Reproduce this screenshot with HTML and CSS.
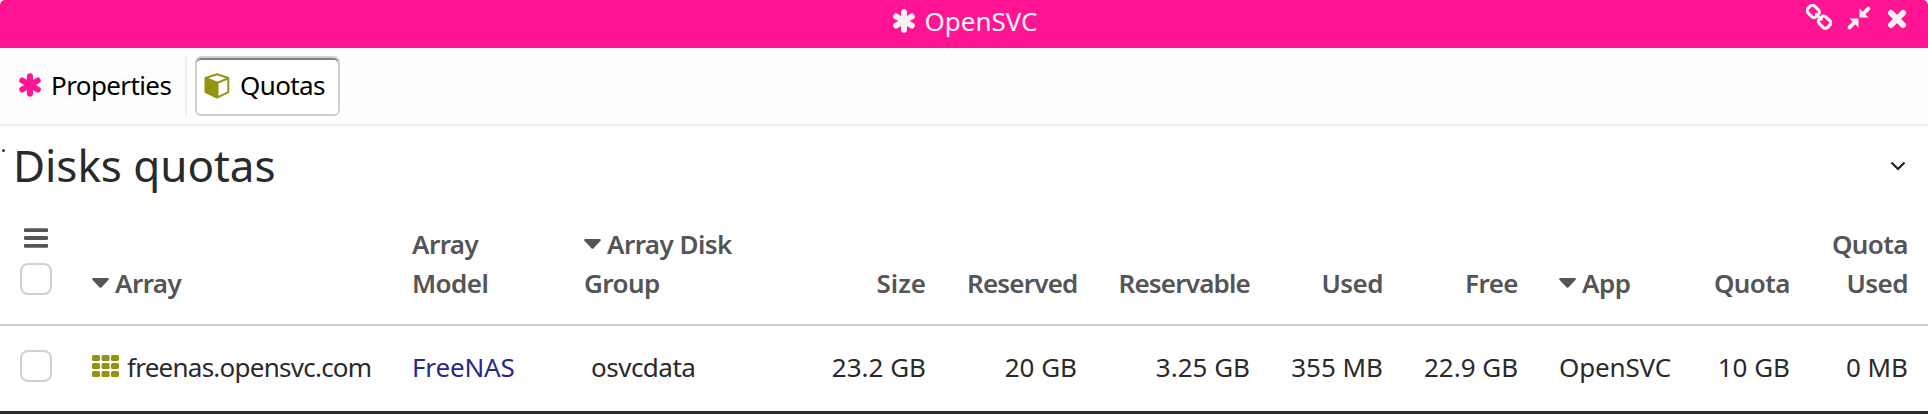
FILE: index.html
```html
<!DOCTYPE html>
<html lang="en">
<head>
<meta charset="utf-8">
<title>OpenSVC</title>
<link rel="stylesheet" href="styles.css">
</head>
<body>
<svg class="defs" width="0" height="0">
  <symbol id="asterisk" viewBox="0 0 24 24"><path d="M12 3.200v17.600M4.200 7.500l15.600 9M4.200 16.500l15.600-9" fill="none" stroke="currentColor" stroke-width="6" stroke-linecap="round"/></symbol>
  <symbol id="caret" viewBox="0 0 17 10"><path d="M1 0h15q1.500.6.4 1.900L9.600 9.300q-1.100 1-2.200 0L.6 1.900Q-.5.6 1 0z" fill="currentColor"/></symbol>
</svg>
<div class="window">
  <header class="titlebar">
    <div class="caption"><svg class="star"><use href="#asterisk"/></svg><span>OpenSVC</span></div>
    <div class="actions">
      <svg class="link" viewBox="0 0 26 26" fill="none" stroke="currentColor" stroke-width="3.200"><rect x="1.400" y="2.700" width="11.600" height="9.400" rx="3.200" transform="rotate(45 7.200 7.400)"/><rect x="12.800" y="13.500" width="11.600" height="9.400" rx="3.200" transform="rotate(45 18.600 18.200)"/><path d="M10.200 10.200l5.400 5.200" stroke-linecap="round" stroke-width="2.600"/></svg>
      <svg class="compress" viewBox="0 0 24 24" fill="currentColor" stroke="currentColor"><path d="M12.500 2.500v9.100h9.100zM11.500 21.500v-9.100H2.400z" stroke="none"/><path d="M15.500 8.500L21.400 2.600M8.500 15.500l-5.900 5.900" stroke-width="3.800" stroke-linecap="round"/></svg>
      <svg class="close" viewBox="0 0 20 20"><path d="M4 4l12 12M16 4L4 16" stroke="currentColor" stroke-width="6" stroke-linecap="round"/></svg>
    </div>
  </header>
  <nav class="tabs">
    <div class="tab"><svg class="star pink"><use href="#asterisk"/></svg><span>Properties</span></div>
    <div class="tab active"><svg class="cube" viewBox="0 0 26 26"><path d="M13 1.200L24.300 5v14.200L13 24.600 1.500 19.200V5z" fill="#fff" stroke="#949412" stroke-width="2" stroke-linejoin="round"/><path d="M1.500 5.200L13.500 9.600v15L1.500 19.200z" fill="#949412"/><path d="M1.500 5.200L13.500 9.600 24.500 5.200M13.500 9.600V24" fill="none" stroke="#949412" stroke-width="2"/></svg><span>Quotas</span></div>
  </nav>
  <section class="heading">
    <i class="dot"></i>
    <h1>Disks quotas</h1>
    <svg class="chevron" viewBox="0 0 16 10"><path d="M1.500 1.500L8 8l6.500-6.500" fill="none" stroke="currentColor" stroke-width="2.200"/></svg>
  </section>
  <table>
    <colgroup><col class="c-check"><col class="c-array"><col class="c-model"><col class="c-group"><col class="c-size"><col class="c-reserved"><col class="c-reservable"><col class="c-used"><col class="c-free"><col class="c-app"><col class="c-quota"><col class="c-qused"></colgroup>
    <thead>
      <tr>
        <th class="check"><svg class="menu" viewBox="0 0 24 20"><path d="M1.500 2.200h21M1.500 10h21M1.500 17.800h21" stroke="currentColor" stroke-width="3.800" stroke-linecap="round"/></svg><span class="box"></span></th>
        <th><svg class="caret"><use href="#caret"/></svg>Array</th>
        <th>Array<br>Model</th>
        <th><svg class="caret"><use href="#caret"/></svg>Array Disk<br>Group</th>
        <th class="num size">Size</th>
        <th class="num wide">Reserved</th>
        <th class="num wide">Reservable</th>
        <th class="num">Used</th>
        <th class="num">Free</th>
        <th><svg class="caret"><use href="#caret"/></svg>App</th>
        <th class="num">Quota</th>
        <th class="num">Quota<br>Used</th>
      </tr>
    </thead>
    <tbody>
      <tr>
        <td class="check"><span class="box"></span></td>
        <td class="host"><svg class="grid" viewBox="0 0 27 22" fill="#949412"><rect width="8" height="6" rx="1.500"/><rect x="9.600" width="8" height="6" rx="1.500"/><rect x="19" width="8" height="6" rx="1.500"/><rect y="8" width="8" height="6" rx="1.500"/><rect x="9.600" y="8" width="8" height="6" rx="1.500"/><rect x="19" y="8" width="8" height="6" rx="1.500"/><rect y="16" width="8" height="6" rx="1.500"/><rect x="9.600" y="16" width="8" height="6" rx="1.500"/><rect x="19" y="16" width="8" height="6" rx="1.500"/></svg>freenas.opensvc.com</td>
        <td class="model">FreeNAS</td>
        <td class="group">osvcdata</td>
        <td class="num">23.2 GB</td>
        <td class="num">20 GB</td>
        <td class="num">3.25 GB</td>
        <td class="num">355 MB</td>
        <td class="num">22.9 GB</td>
        <td class="app">OpenSVC</td>
        <td class="num">10 GB</td>
        <td class="num">0 MB</td>
      </tr>
    </tbody>
  </table>
</div>
</body>
</html>
```
FILE: styles.css
```css
* { box-sizing: border-box; }
body { margin: 0; background: #fff; color: #2a2a2a; font: 26px/39px "Noto Sans", "Open Sans", sans-serif; }
svg { display: block; flex: none; }
.defs { position: absolute; }
.window { height: 414px; overflow: hidden; border-bottom: 3px solid #2b2b2b; }

.titlebar { display: grid; grid-template-columns: 1fr auto 1fr; height: 48px; background: #ff1493; color: #f3f3f3; border-radius: 5px 5px 0 0; }
.caption { grid-column: 2; display: flex; align-items: center; gap: 8px; padding: 0 0 6px 2px; }
.star { width: 24px; height: 24px; }
.actions { display: flex; justify-content: flex-end; padding-right: 20px; }
.link { width: 26px; height: 26px; margin: 4px 15px 0 0; }
.compress { width: 24px; height: 24px; margin: 6px 16px 0 0; }
.close { width: 20px; height: 20px; margin: 9px 1px 0 0; }

.tabs { display: flex; gap: 8px; height: 78px; padding: 8px 0 0 18px; background: #fdfdfd; border-bottom: 2px solid #eee; color: #000; letter-spacing: -.6px; }
.tab { display: flex; align-items: center; gap: 9px; width: 169px; height: 60px; border-right: 2px solid #efefef; }
.tab span { padding-bottom: 1px; }
.pink { color: #ff1493; margin-bottom: 3px; }
.tab.active { width: 145px; gap: 10px; padding-left: 7px; border: 2px solid #d0d0d0; border-radius: 6px; background: #fff; box-shadow: inset 0 2px 0 #808080; }
.cube { width: 26px; height: 26px; }

.heading { display: flex; align-items: flex-start; height: 99px; padding-right: 22px; }
.dot { width: 3px; height: 3px; margin: 23px 8px 0 2px; background: #333; border-radius: 50%; }
h1 { flex: 1; margin: 9px 0 0; font-size: 44px; line-height: 60px; font-weight: 400; letter-spacing: -.05px; }
.chevron { width: 16px; height: 10px; margin-top: 35px; color: #222; }

table { width: 1928px; table-layout: fixed; border-collapse: separate; border-spacing: 0; }
th, td { padding: 0 21px; text-align: left; white-space: nowrap; }
th { height: 101px; padding-bottom: 21px; border-bottom: 2px solid #d0d0d0; vertical-align: bottom; color: #555; font-weight: 600; letter-spacing: -.55px; }
td { height: 85px; padding-top: 22px; vertical-align: top; }
th.num, td.num { padding-right: 20px; text-align: right; }
th.wide { letter-spacing: -.8px; }
th.size { letter-spacing: 0; }
.check { padding-left: 20px; }
th.check { padding-bottom: 29px; }
.box { display: block; width: 32px; height: 32px; border: 2px solid #d0d0d0; border-radius: 8px; background: #fff; }
td .box { margin-top: 2px; }
.menu { width: 24px; height: 20px; margin: 0 0 15px 4px; }
.caret { display: inline-block; width: 17px; height: 10px; margin-right: 6px; vertical-align: 5px; }
.host { letter-spacing: -.75px; }
.grid { display: inline-block; width: 27px; height: 22px; margin-right: 8px; vertical-align: 0; }
.model { color: #27278c; letter-spacing: -.15px; }
.app { letter-spacing: -.15px; }
td.group { padding-left: 28px; letter-spacing: -.5px; }
.c-check { width: 71px; }
.c-array { width: 320px; }
.c-model { width: 172px; }
.c-group { width: 217px; }
.c-size { width: 166px; }
.c-reserved { width: 151px; }
.c-reservable { width: 173px; }
.c-used { width: 133px; }
.c-free { width: 135px; }
.c-app { width: 154px; }
.c-quota { width: 118px; }
.c-qused { width: 118px; }
```
